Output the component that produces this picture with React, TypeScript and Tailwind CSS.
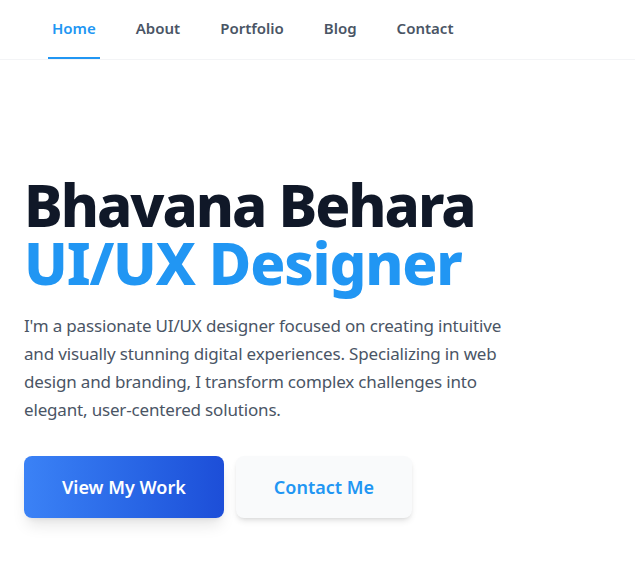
const NAV_ITEMS = ["Home", "About", "Portfolio", "Blog", "Contact"];

export default function App() {
  return (
    <div
      className="min-h-screen bg-white"
      style={{ fontFamily: '"Noto Sans", "Open Sans", sans-serif' }}
    >
      <nav className="border-b border-gray-100 px-12">
        <ul className="flex gap-8">
          {NAV_ITEMS.map((item, i) => (
            <li key={item}>
              <a
                href="#"
                className={`block px-1 pt-4 pb-[17px] text-[15px] font-semibold leading-6 border-b-2 ${
                  i === 0
                    ? "text-[#2196f3] border-[#2196f3]"
                    : "text-gray-600 border-transparent"
                }`}
              >
                {item}
              </a>
            </li>
          ))}
        </ul>
      </nav>

      <section className="px-6 pt-[116px]">
        <h1 className="text-[58px] font-extrabold leading-[58px] tracking-[-0.035em] text-gray-900">
          Bhavana Behara
          <br />
          <span className="text-[#2196f3] tracking-[-0.02em]">UI/UX Designer</span>
        </h1>
        <p className="mt-5 max-w-[500px] text-[17px] leading-7 tracking-[-0.01em] text-gray-600">
          I'm a passionate UI/UX designer focused on creating intuitive and
          visually stunning digital experiences. Specializing in web design and
          branding, I transform complex challenges into elegant, user-centered
          solutions.
        </p>
        <div className="mt-8 flex gap-3">
          <button className="rounded-lg bg-gradient-to-r from-[#3b82f6] to-[#1d4ed8] px-[38px] py-[17px] text-lg font-semibold leading-7 text-white shadow-lg">
            View My Work
          </button>
          <button className="rounded-lg bg-gray-50 px-[38px] py-[17px] text-lg font-semibold leading-7 text-[#2196f3] shadow-md">
            Contact Me
          </button>
        </div>
      </section>
    </div>
  );
}
